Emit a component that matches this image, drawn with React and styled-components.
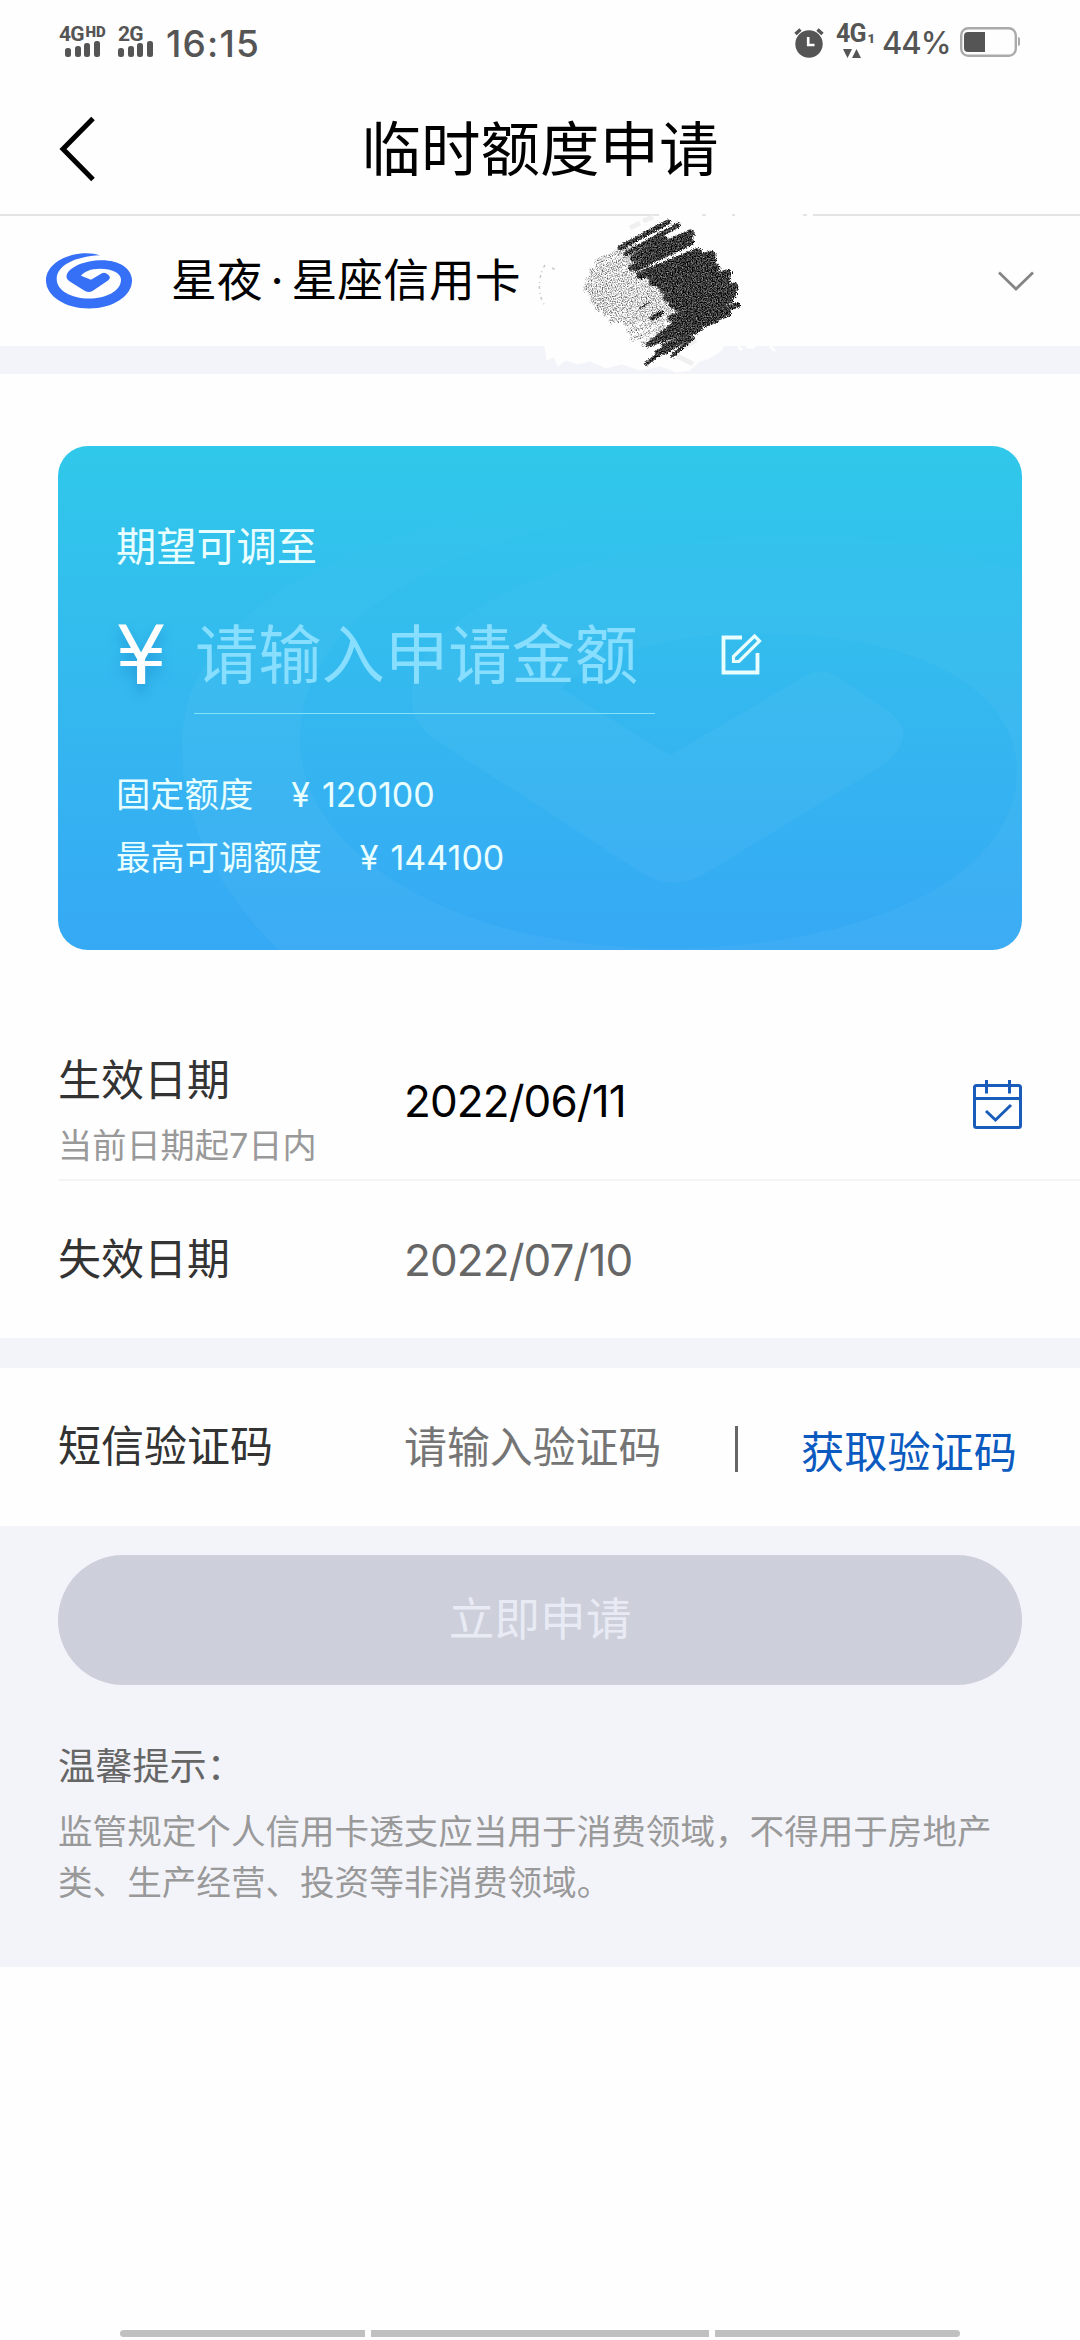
import React from "react"
import styled, { createGlobalStyle, css } from "styled-components"

const GlobalStyle = createGlobalStyle`
  * {
    box-sizing: border-box;
  }
  body {
    margin: 0;
    background: #fefefe;
    font-family: Inter, "Noto Sans CJK SC", sans-serif;
    color: #000;
  }
  input, button {
    font-family: inherit;
  }
`

const Screen = styled.div`
  width: 1080px;
  height: 2340px;
  display: flex;
  flex-direction: column;
  overflow: hidden;
`

const StatusBar = styled.div`
  height: 84px;
  flex: none;
  display: flex;
  justify-content: space-between;
  padding: 0 60px 0 59px;
  color: #555;
`

const StatusSide = styled.div`
  display: flex;
  align-items: flex-start;
`

const Signal = styled.div`
  width: ${({ width }) => width}px;
  padding-top: 26px;
`

const Network = styled.div`
  display: flex;
  align-items: flex-start;
  font-family: Roboto, sans-serif;
  font-size: ${({ size }) => size || 21}px;
  line-height: 16px;
  height: ${({ height }) => height || 15}px;
  font-weight: 700;
  letter-spacing: -0.9px;
`

const Suffix = styled.span`
  font-size: ${({ low }) => (low ? 13 : 15)}px;
  line-height: ${({ low }) => (low ? "26px" : "12px")};
  font-weight: 900;
  letter-spacing: 0;
  margin-left: 2px;
`

const Bars = styled.div`
  display: flex;
  align-items: flex-end;
  gap: 3.5px;
  height: 16px;
  padding-left: ${({ indent }) => indent || 0}px;
`

const Bar = styled.i`
  width: 6px;
  height: ${({ height }) => height}px;
  border-radius: 2.5px;
  background: #555;
`

const StatusText = styled.div`
  font-size: ${({ size }) => size}px;
  font-weight: 500;
  line-height: 40px;
  letter-spacing: ${({ spacing }) => spacing}px;
  padding-top: ${({ top }) => top}px;
  width: ${({ width }) => width}px;
  white-space: nowrap;
`

const StatusIcon = styled.svg`
  display: block;
  flex: none;
  margin-top: ${({ $top }) => $top}px;
  margin-right: ${({ $right }) => $right || 0}px;
`

const Header = styled.header`
  height: 132px;
  flex: none;
  display: grid;
  grid-template-columns: 120px 1fr 120px;
  align-items: center;
  border-bottom: 2px solid #e4e4e4;
`

const BackIcon = styled.svg`
  margin-left: 58px;
`

const Title = styled.h1`
  margin: 0;
  text-align: center;
  font-size: 59.5px;
  line-height: 80px;
  font-weight: 400;
`

const CardPicker = styled.div`
  position: relative;
  height: 130px;
  flex: none;
  display: flex;
  align-items: center;
  padding: 0 46px;
`

const CardName = styled.div`
  flex: 1;
  margin-left: 39px;
  font-size: 45.8px;
  line-height: 60px;
  word-spacing: -5px;
`

const Scribble = styled.svg`
  position: absolute;
  left: 530px;
  top: -6px;
  pointer-events: none;
`

const Divider = styled.div`
  height: ${({ height }) => height}px;
  flex: none;
  background: #f3f4fa;
`

const Main = styled.main`
  flex: none;
`

const LimitCard = styled.section`
  position: relative;
  overflow: hidden;
  width: 964px;
  height: 504px;
  margin: 71.5px 58px 0;
  padding: 77px 58px 0;
  border-radius: 30px;
  color: #e8feff;
  background: linear-gradient(#30c8ea, #34b8ef 50%, #36a9f5);
`

const Watermark = styled.svg`
  position: absolute;
  left: 0;
  top: 0;
`

const CardContent = styled.div`
  position: relative;
`

const CardLabel = styled.div`
  font-size: 40.2px;
  line-height: 48px;
`

const AmountRow = styled.div`
  display: flex;
  align-items: flex-start;
  height: 106px;
  margin-top: 37px;
`

const Currency = styled.span`
  width: 78px;
  color: #fff;
  font-family: "DejaVu Sans", sans-serif;
  font-size: 82px;
  line-height: 96px;
  text-indent: -1px;
  text-shadow: 0 8px 12px rgba(20, 110, 190, 0.4);
`

const AmountInput = styled.input`
  width: 461px;
  height: 106px;
  padding: 0 0 10px 1px;
  border: 0;
  border-bottom: 1.5px solid #85e2fb;
  outline: 0;
  background: none;
  font-size: 63.3px;
  &::placeholder {
    color: #87defe;
    opacity: 1;
  }
`

const EditIcon = styled.svg`
  margin: 25px 0 0 65px;
`

const Limits = styled.div`
  margin-top: 49px;
`

const LimitLine = styled.div`
  display: flex;
  gap: 38px;
  font-size: 34.3px;
  line-height: 63px;
`

const LimitValue = styled.span`
  display: flex;
  gap: 12px;
  font-size: 34px;
`

const Form = styled.div`
  margin-top: 82.5px;
`

const Row = styled.div`
  display: flex;
  height: ${({ height }) => height}px;
  margin-left: 58px;
  padding-right: 58px;
  ${({ line }) =>
    line &&
    css`
      border-bottom: 2px solid #f4f4f7;
    `}
`

const Labels = styled.div`
  width: 346px;
  padding-top: ${({ top }) => top}px;
`

const Label = styled.div`
  font-size: 43px;
  line-height: 60px;
  color: #333;
`

const Hint = styled.div`
  margin-top: 11px;
  font-size: 34.2px;
  line-height: 50px;
  color: #999;
`

const DateValue = styled.div`
  flex: 1;
  padding-top: ${({ top }) => top}px;
  font-size: 44px;
  line-height: 60px;
  letter-spacing: -0.9px;
  color: ${({ muted }) => (muted ? "#666" : "#000")};
`

const CalendarIcon = styled.svg`
  margin: 46px -2px 0 0;
`

const CodeInput = styled.input`
  width: 331px;
  height: 60px;
  margin-top: 49px;
  padding: 0;
  border: 0;
  outline: 0;
  background: none;
  font-size: 42.9px;
  &::placeholder {
    color: #757575;
    opacity: 1;
  }
`

const Separator = styled.i`
  width: 3px;
  height: 46px;
  margin-top: 58px;
  background: #666;
`

const CodeButton = styled.button`
  margin: 54px 0 0 63px;
  padding: 0;
  height: 60px;
  border: 0;
  background: none;
  font-size: 43.2px;
  line-height: 60px;
  color: #0b5ac0;
  white-space: nowrap;
`

const Footer = styled.footer`
  height: 441px;
  flex: none;
  padding: 29px 58px 0;
  background: #f3f4fa;
`

const Submit = styled.button`
  display: block;
  width: 964px;
  height: 130px;
  padding: 0 0 9px;
  border: 0;
  border-radius: 65px;
  background: #cdcfdb;
  color: #e8eaf4;
  font-size: 45.7px;
`

const TipsTitle = styled.div`
  margin-top: 57px;
  font-size: 37.2px;
  line-height: 50px;
  color: #666;
`

const Tips = styled.p`
  margin: 14px 0 0;
  width: 940px;
  font-size: 34.6px;
  line-height: 51px;
  color: #999;
`

const NavBar = styled.div`
  display: flex;
  gap: 6px;
  width: 840px;
  height: 7px;
  margin: auto auto 3px;
`

const NavPill = styled.i`
  flex: ${({ grow }) => grow};
  background: #c0c0c0;
  &:first-child {
    border-radius: 4px 0 0 4px;
  }
  &:last-child {
    border-radius: 0 4px 4px 0;
  }
`

const SignalBars = ({ indent }) => (
  <Bars indent={indent}>
    {[9, 11, 14, 16].map(h => (
      <Bar key={h} height={h} />
    ))}
  </Bars>
)

const Logo = () => (
  <svg width="86" height="56" viewBox="0 0 86 56">
    <path
      fill="#3670f6"
      d="M54 2.3C47-.3 36-.6 26 2C10 6.5 0 16 0 27.5C0 43 19 55.5 43 55.5C67 55.5 86 43 86 27.5C86 15.5 73 7.3 56 7.3C38 7.3 22.5 14.5 20.6 22.5C20 25.5 22 27.5 25 29.3L39 38Q42.7 40 46.5 38L62 27.5Q65.5 24.5 62.5 22L60 20.3Q58 19.3 55.5 20.5L45 26.7L35 22.8C38 18.5 45 15.7 54 15.7C66 15.7 75 20 75 26.7C75 38 60 45.5 43 45.5C25 45.5 10.7 37.5 10.7 26C10.7 13 28 3.5 54 2.3Z"
    />
  </svg>
)

// pencil strokes, [x1, y1, x2, y2, width]
const darkStrokes = [
  [620, 248, 668, 222, 5],
  [626, 254, 678, 225, 5],
  [634, 258, 690, 233, 7],
  [631, 268, 692, 234, 6],
  [634, 258, 664, 240, 8],
  [636, 267, 690, 242, 8],
  [640, 275, 698, 252, 8],
  [650, 275, 711, 255, 9],
  [653, 282, 712, 260, 9],
  [660, 285, 716, 268, 9],
  [664, 290, 728, 273, 8],
  [667, 298, 726, 280, 9],
  [673, 304, 734, 287, 9],
  [678, 308, 733, 294, 8],
  [671, 318, 730, 300, 7],
  [674, 325, 722, 306, 8],
  [668, 331, 737, 305, 6],
  [660, 338, 728, 314, 6],
  [652, 343, 716, 320, 6],
  [648, 345, 672, 326, 5],
  [664, 346, 700, 329, 5],
  [657, 352, 690, 338, 4],
  [646, 364, 676, 341, 4],
  [672, 356, 693, 338, 4],
  [664, 353, 684, 341, 4],
  [652, 318, 661, 313, 5],
  [640, 308, 648, 303, 2],
]

const lightStrokes = [
  [596, 262, 634, 246, 5],
  [592, 271, 636, 254, 7],
  [588, 279, 640, 259, 6],
  [586, 288, 646, 266, 8],
  [592, 294, 652, 273, 8],
  [594, 301, 662, 280, 8],
  [598, 307, 668, 288, 8],
  [605, 312, 672, 295, 8],
  [611, 320, 674, 303, 7],
  [626, 323, 672, 310, 6],
  [629, 331, 668, 319, 6],
  [631, 339, 664, 327, 5],
  [642, 343, 662, 333, 4],
]

const Strokes = ({ items }) =>
  items.map(([x1, y1, x2, y2, w], i) => (
    <line key={i} x1={x1} y1={y1} x2={x2} y2={y2} strokeWidth={w} />
  ))

const PencilMark = () => (
  <Scribble width="300" height="172" viewBox="530 210 300 172">
    <filter id="darkGrain" x="-5%" y="-5%" width="110%" height="110%" colorInterpolationFilters="sRGB">
      <feTurbulence type="fractalNoise" baseFrequency=".8" numOctaves="2" seed="4" result="noise" />
      <feDisplacementMap
        in="SourceGraphic"
        in2="noise"
        scale="5"
        xChannelSelector="R"
        yChannelSelector="G"
        result="rough"
      />
      <feColorMatrix
        in="noise"
        values="1.2 0 0 0 -.38  1.2 0 0 0 -.38  1.2 0 0 0 -.38  0 0 0 0 1"
      />
      <feComposite in2="rough" operator="in" />
    </filter>
    <filter id="lightGrain" x="-5%" y="-5%" width="110%" height="110%" colorInterpolationFilters="sRGB">
      <feTurbulence type="fractalNoise" baseFrequency=".8" numOctaves="2" seed="9" result="noise" />
      <feDisplacementMap
        in="SourceGraphic"
        in2="noise"
        scale="8"
        xChannelSelector="R"
        yChannelSelector="G"
        result="rough"
      />
      <feColorMatrix
        in="noise"
        values="1.6 0 0 0 .03  1.6 0 0 0 .03  1.6 0 0 0 .03  0 0 0 0 1"
      />
      <feComposite in2="rough" operator="in" />
    </filter>
    <g fill="none" stroke="#fefefe">
      <path strokeWidth="4" d="M659 215H702M706 215H732M735 215H803M807 215h6" />
      <path
        fill="#fefefe"
        d="M545 346L547 360L554 357L558 366L566 360L578 364L590 361L606 368L622 364L640 370L660 366L676 372L690 370L700 361L708 359L722 350L724 344Z"
      />
      <path strokeWidth="3" d="M738 347l4 3M746 347h9M770 346l5 5" />
    </g>
    <path stroke="#f0f0f0" strokeWidth="5" fill="none" d="M630 228l10-5M643 221l10-4M682 348l14-8M677 356l16 8" />
    <path
      stroke="#c9c9c9"
      strokeWidth="1.5"
      strokeDasharray="3 4 1 3"
      fill="none"
      d="M545 265C539 275 536 292 545 306M552 268l6 3"
    />
    <g filter="url(#lightGrain)" stroke="#ccc" strokeLinecap="round">
      <Strokes items={lightStrokes} />
    </g>
    <g filter="url(#darkGrain)" stroke="#333" strokeLinecap="round">
      <Strokes items={darkStrokes} />
    </g>
  </Scribble>
)

const App = () => (
  <>
    <GlobalStyle />
    <Screen>
      <StatusBar>
        <StatusSide>
          <Signal width={59}>
            <Network>
              4G<Suffix>HD</Suffix>
            </Network>
            <SignalBars indent={6} />
          </Signal>
          <Signal width={48}>
            <Network>2G</Network>
            <SignalBars />
          </Signal>
          <StatusText size={37} top={24} spacing={1.2} width={98}>
            16:15
          </StatusText>
        </StatusSide>
        <StatusSide>
          <StatusIcon $top={28} $right={12} width="30" height="30" viewBox="0 0 30 30">
            <circle cx="15" cy="16" r="13.7" fill="#555" />
            <path d="M1.5 6L6.5 1.5M28.5 6L23.5 1.5" stroke="#555" strokeWidth="3.4" />
            <path d="M14.2 9V17H20.5" stroke="#fff" strokeWidth="2.6" fill="none" />
          </StatusIcon>
          <Signal width={46}>
            <Network size={25} height={23}>
              4G<Suffix low>1</Suffix>
            </Network>
            <Bars indent={7}>
              <svg width="18" height="16" viewBox="0 0 18 16">
                <path d="M0 0H9L4.5 9ZM9 9H18L13.5 0Z" fill="#555" />
              </svg>
            </Bars>
          </Signal>
          <StatusText size={31} top={23} spacing={-1} width={78}>
            44%
          </StatusText>
          <StatusIcon $top={27} width="60" height="30" viewBox="0 0 60 30">
            <rect x="1.2" y="1.2" width="54.6" height="27.6" rx="7" fill="none" stroke="#aaa" strokeWidth="2.4" />
            <path d="M25 5V25H8Q4 25 4 21V9Q4 5 8 5Z" fill="#555" />
            <path d="M58 10Q60 10 60 12V17Q60 19 58 19Z" fill="#aaa" />
          </StatusIcon>
        </StatusSide>
      </StatusBar>
      <Header>
        <BackIcon width="40" height="68" viewBox="0 0 40 68" fill="none" stroke="#000" strokeWidth="5">
          <path d="M35 3.5L5 34L35 64.500" />
        </BackIcon>
        <Title>临时额度申请</Title>
      </Header>
      <CardPicker>
        <Logo />
        <CardName>星夜 · 星座信用卡</CardName>
        <svg width="38" height="22" viewBox="0 0 38 22" fill="none" stroke="#858585" strokeWidth="2.8">
          <path d="M3 2.500L20 19L37 2.500" />
        </svg>
        <PencilMark />
      </CardPicker>
      <Divider height={28} />
      <Main>
        <LimitCard>
          <Watermark width="964" height="504" viewBox="58 445.5 964 504">
            <linearGradient id="fade" x1="0" y1="0" x2="0" y2="1">
              <stop offset="0" stopColor="#fff" stopOpacity="0" />
              <stop offset=".45" stopColor="#fff" stopOpacity=".035" />
              <stop offset="1" stopColor="#fff" stopOpacity=".035" />
            </linearGradient>
            <path
              fill="url(#fade)"
              d="M811 490C500 475 182 560 182 745C182 830 225 900 290 960H1030V575C960 548 880 535 800 535C600 535 425 600 412 690C410 715 418 728 440 742L640 871Q672 892 705 873L884 764Q920 733 890 712L835 675Q819 666 803 677L670 755L561 688C600 650 680 633 760 633C920 633 1017 690 1017 770C1017 880 860 948 665 948C450 948 300 850 300 740C300 600 480 510 811 490Z"
            />
          </Watermark>
          <CardContent>
            <CardLabel>期望可调至</CardLabel>
            <AmountRow>
              <Currency>¥</Currency>
              <AmountInput placeholder="请输入申请金额" />
              <EditIcon width="42" height="42" viewBox="0 0 42 42" fill="none" stroke="#e8feff" strokeWidth="3.8">
                <path d="M22 4.500H3.500V39.500H37.500V20" />
                <path d="M34.500 3L39.500 8L19 28.500H13.500V23.500Z" strokeWidth="3.2" />
              </EditIcon>
            </AmountRow>
            <Limits>
              <LimitLine>
                固定额度
                <LimitValue>
                  <span>¥</span>
                  <span>120100</span>
                </LimitValue>
              </LimitLine>
              <LimitLine>
                最高可调额度
                <LimitValue>
                  <span>¥</span>
                  <span>144100</span>
                </LimitValue>
              </LimitLine>
            </Limits>
          </CardContent>
        </LimitCard>
        <Form>
          <Row height={149} line>
            <Labels top={18}>
              <Label>生效日期</Label>
              <Hint>当前日期起7日内</Hint>
            </Labels>
            <DateValue top={39}>2022/06/11</DateValue>
            <CalendarIcon width="52" height="52" viewBox="0 0 52 52" fill="none" stroke="#1a5cba" strokeWidth="3">
              <rect x="2.500" y="7.500" width="46" height="42" rx="2" />
              <path d="M2.500 20.500H48.500M14.500 2V15.500M37.500 2V15.500M14 33L23.500 42L39 27" />
            </CalendarIcon>
          </Row>
          <Row height={157}>
            <Labels top={48}>
              <Label>失效日期</Label>
            </Labels>
            <DateValue top={49} muted>
              2022/07/10
            </DateValue>
          </Row>
        </Form>
        <Divider height={30} />
        <Row height={158}>
          <Labels top={48}>
            <Label>短信验证码</Label>
          </Labels>
          <CodeInput placeholder="请输入验证码" />
          <Separator />
          <CodeButton>获取验证码</CodeButton>
        </Row>
      </Main>
      <Footer>
        <Submit>立即申请</Submit>
        <TipsTitle>温馨提示：</TipsTitle>
        <Tips>监管规定个人信用卡透支应当用于消费领域，不得用于房地产类、生产经营、投资等非消费领域。</Tips>
      </Footer>
      <NavBar>
        <NavPill grow={245} />
        <NavPill grow={338} />
        <NavPill grow={245} />
      </NavBar>
    </Screen>
  </>
)

export default App
